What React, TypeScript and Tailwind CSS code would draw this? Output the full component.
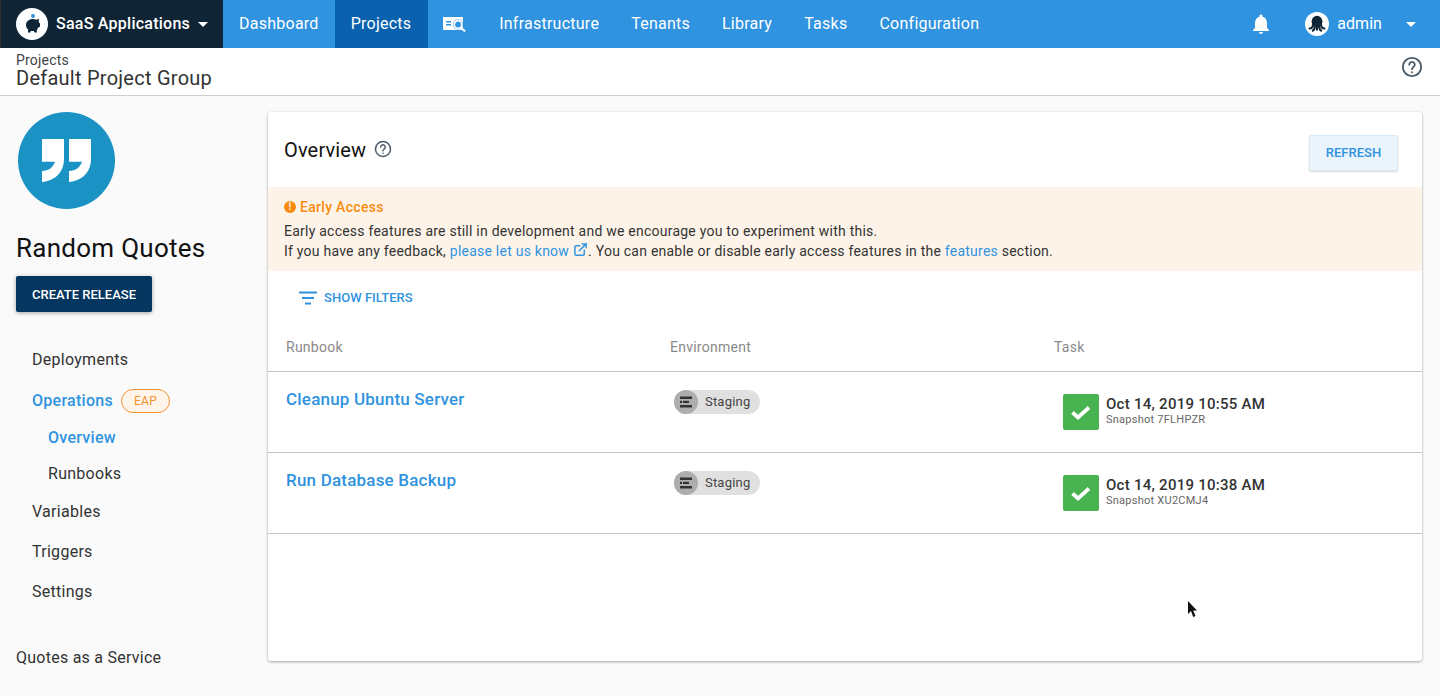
import { ExternalLink } from 'lucide-react';

const navItems = ['Dashboard', 'Projects', 'search', 'Infrastructure', 'Tenants', 'Library', 'Tasks', 'Configuration'];

const HelpIcon = ({ className }: { className: string }) => (
  <svg className={className} viewBox="0 0 24 24" fill="none" stroke="currentColor" strokeWidth={2}>
    <circle cx="12" cy="12" r="10" />
    <path strokeLinecap="round" d="M9 9.500a3 3 0 1 1 4.600 2.500c-1 .7-1.600 1.200-1.600 2.400" />
    <circle cx="12" cy="17.600" r="1.100" fill="currentColor" stroke="none" />
  </svg>
);

const Octopus = ({ className }: { className: string }) => (
  <svg className={className} viewBox="0 0 24 24" fill="none" stroke="currentColor" strokeLinecap="round">
    <ellipse cx="12" cy="9" rx="6.500" ry="7" fill="currentColor" stroke="none" />
    <path strokeWidth={2.400} d="M7 13c0 3-1.500 4.500-4 4.500M9.500 14c0 3-.8 5-2.500 6M14.500 14c0 3 .8 5 2.500 6M17 13c0 3 1.500 4.500 4 4.500M12 14v5" />
  </svg>
);

const EnvChip = () => (
  <div className="ml-1 mt-[6px] flex h-6 w-[86px] items-center rounded-full bg-[#e0e0e0]">
    <span className="flex h-6 w-6 items-center justify-center rounded-full bg-[#adadad]">
      <svg className="h-3.5 w-3.5 text-[#333]" viewBox="0 0 14 14" fill="currentColor">
        <rect x="1" y="1.500" width="12" height="2.500" />
        <rect x="1" y="5.800" width="2" height="2.200" />
        <rect x="4" y="5.800" width="6" height="2.200" />
        <rect x="1" y="10" width="12" height="2.500" />
      </svg>
    </span>
    <span className="ml-[7px] text-[13px] tracking-[0.2px] text-[#444]">Staging</span>
  </div>
);

const Row = ({ name, date, snapshot }: { name: string; date: string; snapshot: string }) => (
  <div className="grid h-[81px] grid-cols-[384px_393px_1fr] border-b border-[#c4c4c4] pl-[18px]">
    <div className="pt-[15px] text-[17px] leading-[24px] font-medium tracking-[0.2px] text-[#2f93e0]">{name}</div>
    <div className="pt-[12px]">
      <EnvChip />
    </div>
    <div className="flex pt-[22px]">
      <div className="flex h-9 w-9 items-center justify-center rounded-[2px] bg-[#48b350]">
        <svg className="h-5 w-5 text-white" viewBox="0 0 20 20" fill="none" stroke="currentColor" strokeWidth={3.800}>
          <path d="M1.500 10.500l5.500 5 11-10" />
        </svg>
      </div>
      <div className="ml-[7px]">
        <div className="pt-px text-[15px] leading-[19px] font-medium tracking-[0.26px] text-[#333]">{date}</div>
        <div className="text-[11px] leading-[11px] tracking-[0.25px] text-[#666]">{snapshot}</div>
      </div>
    </div>
  </div>
);

export default function App() {
  return (
    <div className="relative flex h-[696px] w-[1440px] flex-col overflow-hidden bg-[#fafafa] font-['Roboto',sans-serif]">
      {/* Top nav */}
      <div className="flex h-12 items-center bg-[#2f93e0] text-white">
        <div className="flex h-12 w-[223px] items-center border-l border-[#333] bg-[#0f2535] pl-[15px]">
          <span className="flex h-8 w-8 items-center justify-center rounded-full bg-white">
            <svg className="h-8 w-8" viewBox="0 0 32 32">
              <path fill="#0f2535" d="M10 17c0-3.500 3-6 7-6 1.300 0 2.500.3 3.400.8l2.600-1-.4 3.100 1.400 1.700v3.200l-1.800.7-1.400 2.700v2.300h-2.300l-.5-1.500h-3.200l-.5 1.500H12v-3c-1.300-1.300-2-2.800-2-4.500z" />
              <circle cx="17" cy="8" r="2" fill="#2f93e0" />
            </svg>
          </span>
          <span className="ml-2 text-[16px] font-medium tracking-[0.25px]">SaaS Applications</span>
          <span className="ml-2 mt-px h-0 w-0 border-x-[5px] border-t-[5px] border-x-transparent border-t-white" />
        </div>
        {navItems.map((item) =>
          item === 'search' ? (
            <div key={item} className="flex h-12 w-[55.5px] items-center justify-center">
              <svg className="h-[18px] w-6" viewBox="0 0 24 18" fill="none">
                <path fill="#fff" d="M0 2h20v13H0z" />
                <path fill="#2f93e0" d="M3 6h5v1.500H3zM3 9h5v1.500H3z" />
                <circle cx="15" cy="9.500" r="5" fill="#2f93e0" />
                <circle cx="15" cy="9.500" r="3.800" stroke="#fff" strokeWidth={1.800} />
                <path stroke="#fff" strokeWidth={2} d="M18 12.500l4 4" />
              </svg>
            </div>
          ) : (
            <div
              key={item}
              className={`flex h-12 items-center px-4 text-[16px] tracking-[0.25px] ${item === 'Projects' ? 'w-[93px] bg-[#0a62ae]' : ''}`}
            >
              {item}
            </div>
          ),
        )}
        <svg className="ml-auto h-6 w-6" viewBox="0 0 24 24" fill="currentColor">
          <path d="M12 22c1.100 0 2-.9 2-2h-4c0 1.100.89 2 2 2zm6-6v-5c0-3.070-1.640-5.640-4.500-6.320V4c0-.83-.67-1.500-1.500-1.500s-1.500.67-1.500 1.500v.68C7.630 5.360 6 7.920 6 11v5l-2 2v1h16v-1l-2-2z" />
        </svg>
        <span className="ml-[32px] flex h-6 w-6 items-center justify-center rounded-full bg-white text-[#0f2535]">
          <Octopus className="h-5 w-5" />
        </span>
        <span className="ml-2 text-[16px] tracking-[0.05px]">admin</span>
        <span className="ml-[24px] mr-[24px] mt-px h-0 w-0 border-x-[5px] border-t-[5px] border-x-transparent border-t-white" />
      </div>

      {/* Area header */}
      <div className="flex h-[48px] items-start justify-between border-b border-[#cfcfcf] bg-white pl-4 pr-[17px]">
        <div className="pt-[4px]">
          <div className="text-[14px] leading-[16px] tracking-[0.2px] text-[#444]">Projects</div>
          <div className="text-[20px] leading-[20px] tracking-[0.25px] text-[#333]">Default Project Group</div>
        </div>
        <HelpIcon className="mt-[8px] h-[22px] w-[22px] text-[#4a5a68]" />
      </div>

      <div className="flex flex-1">
        {/* Sidebar */}
        <div className="w-[268px] shrink-0 pl-4 pt-4">
          <div className="ml-[2px] flex h-[97px] w-[97px] items-center justify-center rounded-full bg-[#1a92c4]">
            <svg className="h-[43px] w-[49px] text-white" viewBox="0 0 49 43" fill="currentColor">
              <path d="M0 0h22v20c0 13-9 22-22 23V32c7-.5 11-3.500 13-9.300H0zM27 0h22v20c0 13-9 22-22 23V32c7-.5 11-3.500 13-9.300H27z" />
            </svg>
          </div>
          <div className="mt-[21px] text-[26px] leading-[36px] tracking-[0.27px] text-[#111]">Random Quotes</div>
          <button className="mt-[10px] h-9 w-[136px] rounded-[2px] bg-[#04365f] pt-px text-[13px] font-medium text-white shadow-[0_1px_4px_rgba(0,0,0,0.35)]">
            CREATE RELEASE
          </button>
          <div className="mt-[28px] pl-4 text-[16px] tracking-[0.28px] text-[#333]">
            <div className="h-[40px] leading-[40px]">Deployments</div>
            <div className="flex h-[42px] items-center font-medium text-[#2f93e0]">
              Operations
              <span className="ml-2 flex h-6 w-[49px] items-center justify-center rounded-full border border-[#f59331] bg-[#fff4e9] text-[12px] font-normal text-[#f59331]">
                EAP
              </span>
            </div>
            <div className="ml-4 h-[36px] leading-[32px] font-medium text-[#2f93e0]">Overview</div>
            <div className="ml-4 h-[34px] leading-[32px]">Runbooks</div>
            <div className="h-[40px] leading-[40px]">Variables</div>
            <div className="h-[40px] leading-[40px]">Triggers</div>
            <div className="h-[40px] leading-[40px]">Settings</div>
          </div>
          <div className="mt-[34px] text-[16px] tracking-[0.25px] text-[#333]">Quotes as a Service</div>
        </div>

        {/* Main card */}
        <div className="mt-4 h-[549px] w-[1154px] rounded-[3px] bg-white shadow-[0_1px_3px_rgba(0,0,0,0.35)]">
          <div className="flex h-[75px] items-start justify-between pl-4 pr-[24px]">
            <div className="flex items-center pt-[24px]">
              <span className="text-[20px] leading-[28px] tracking-[0.15px] text-[#111]">Overview</span>
              <HelpIcon className="ml-2 mb-[3px] h-[18px] w-[18px] text-[#4a5a68]" />
            </div>
            <button className="mt-[23px] h-9 w-[89px] rounded-[2px] border border-[#d9e9f5] bg-[#eaf4fc] text-[13px] font-medium text-[#2f93e0] shadow-[0_1px_2px_rgba(0,0,0,0.15)]">
              REFRESH
            </button>
          </div>

          <div className="h-[84px] bg-[#fef3e9] pl-4 pt-[10px] text-[14px] leading-[20px] tracking-[0.235px] text-[#333]">
            <div className="flex items-center font-medium tracking-[0.3px] text-[#f98c0e]">
              <span className="mr-[4px] flex h-[12px] w-[12px] items-center justify-center rounded-full bg-[#f98c0e] text-[10px] leading-none font-bold text-[#fef3e9]">
                !
              </span>
              Early Access
            </div>
            <div className="mt-[4px]">Early access features are still in development and we encourage you to experiment with this.</div>
            <div>
              If you have any feedback, <span className="text-[#2f93e0]">please let us know</span>
              <ExternalLink className="ml-[4px] inline h-[15px] w-[15px] align-[-1px] text-[#2f93e0]" strokeWidth={2.400} />
              . You can enable or disable early access features in the <span className="text-[#2f93e0]">features</span> section.
            </div>
          </div>

          <div className="flex h-[52px] items-center pl-[31px] pt-[1px] text-[#2f93e0]">
            <svg className="h-[14px] w-[18px]" viewBox="0 0 18 14" fill="currentColor">
              <rect x="0" y="0.500" width="18" height="2" />
              <rect x="3" y="6" width="12" height="2" />
              <rect x="6" y="11.500" width="6" height="2" />
            </svg>
            <span className="ml-[7px] text-[13px] font-medium tracking-[0.03px]">SHOW FILTERS</span>
          </div>

          <div className="grid h-[49px] grid-cols-[384px_384px_1fr] items-center border-b border-[#c4c4c4] pl-[18px] pt-[1px] text-[14px] tracking-[0.25px] text-[#8a8a8a]">
            <span>Runbook</span>
            <span>Environment</span>
            <span>Task</span>
          </div>

          <Row name="Cleanup Ubuntu Server" date="Oct 14, 2019 10:55 AM" snapshot="Snapshot 7FLHPZR" />
          <Row name="Run Database Backup" date="Oct 14, 2019 10:38 AM" snapshot="Snapshot XU2CMJ4" />
        </div>
      </div>

      {/* Mouse pointer */}
      <svg className="absolute left-[1187px] top-[601px] h-[18px] w-[11px]" viewBox="0 0 11 18" fill="#111">
        <path d="M1 0v13l3-3 2.200 6 2.300-1-2.300-5.500H10z" />
      </svg>
    </div>
  );
}
